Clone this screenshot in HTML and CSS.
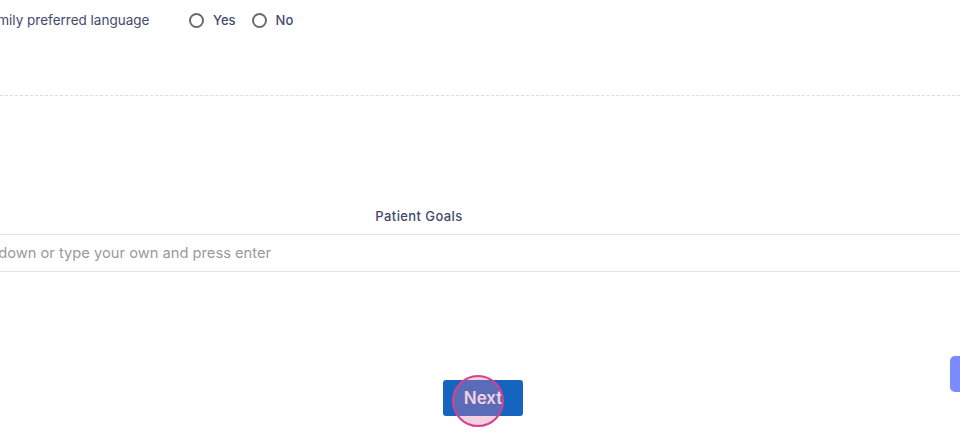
FILE: index.html
```html
<!DOCTYPE html>
<html>
<head>
<meta charset="utf-8">
<link rel="stylesheet" href="styles.css">
</head>
<body>
<div class="page">
  <div class="lang-row">
    <span class="lang-label">Family preferred language</span>
    <label class="radio"><span class="circle"></span><span class="rtext">Yes</span></label>
    <label class="radio"><span class="circle"></span><span class="rtext">No</span></label>
  </div>
  <div class="divider"></div>
  <div class="goals">
    <div class="goals-title">Patient Goals</div>
    <div class="goals-input">Select from drop down or type your own and press enter</div>
  </div>
  <div class="actions">
    <button class="next">Next</button>
    <span class="click-ring"></span>
  </div>
</div>
<div class="side-tab"></div>
</body>
</html>
```

FILE: styles.css
```css
html, body {
  margin: 0;
  padding: 0;
  background: #fff;
  overflow: hidden;
  width: 960px;
  height: 445px;
  font-family: "Inter", "Open Sans", sans-serif;
}
.page {
  position: relative;
  width: 960px;
  height: 445px;
}
.lang-row {
  display: flex;
  align-items: center;
  height: 20px;
  margin-top: 10px;
  margin-left: -18px;
  color: #3f4a6e;
  font-size: 13.5px;
}
.lang-label {
  width: 207px;
}
.radio {
  display: flex;
  align-items: center;
  margin-right: 16px;
}
.circle {
  width: 11px;
  height: 11px;
  border: 2px solid #6b6b6b;
  border-radius: 50%;
  margin-right: 9px;
}
.rtext {
  font-size: 13px;
  font-weight: 500;
  color: #3f4a6e;
}
.divider {
  margin-top: 65px;
  border-top: 1px dashed #dcdbe6;
}
.goals {
  margin-top: 111px;
  margin-left: -122px;
  width: 1082px;
}
.goals-title {
  text-align: center;
  font-size: 13px;
  letter-spacing: 0.4px;
  font-weight: 500;
  color: #3f4a6e;
  height: 18px;
  line-height: 18px;
}
.goals-input {
  margin-top: 9px;
  border-top: 1px solid #e3e2ea;
  border-bottom: 1px solid #e3e2ea;
  height: 36px;
  line-height: 36px;
  font-size: 14.7px;
  color: #9a9a9a;
  padding-left: 0;
}
.actions {
  position: relative;
  display: flex;
  justify-content: center;
  margin-top: 108px;
  padding-left: 6px;
}
.next {
  width: 80px;
  height: 36px;
  background: #1565c0;
  border: none;
  border-radius: 3px;
  color: #fff;
  font-family: "Inter", sans-serif;
  font-size: 17px;
  font-weight: 600;
}
.click-ring {
  position: absolute;
  left: 452px;
  top: -5px;
  width: 48px;
  height: 48px;
  border-radius: 50%;
  border: 2px solid #d8408e;
  background: rgba(226, 120, 170, 0.35);
}
.side-tab {
  position: absolute;
  left: 950px;
  top: 356px;
  width: 14px;
  height: 36px;
  border-radius: 5px 0 0 5px;
  background: #7b8cff;
}
```
